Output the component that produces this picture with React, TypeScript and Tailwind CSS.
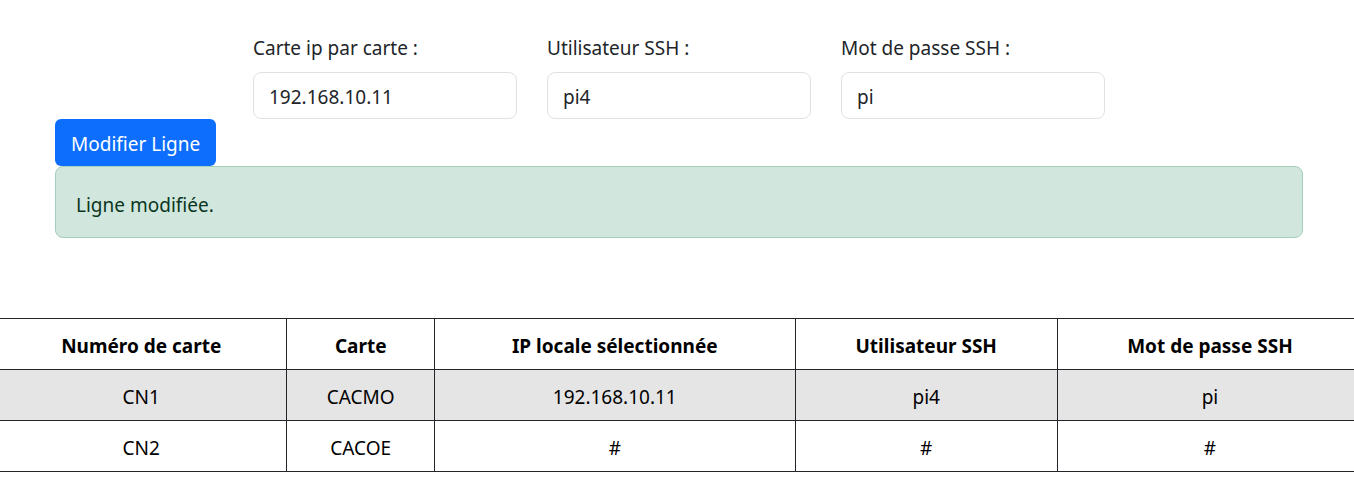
const fields = [
  { id: "ip", label: "Carte ip par carte :", value: "192.168.10.11" },
  { id: "user", label: "Utilisateur SSH :", value: "pi4" },
  { id: "password", label: "Mot de passe SSH :", value: "pi" },
];

const columns = [
  { title: "Numéro de carte", width: "w-[21.3%]" },
  { title: "Carte", width: "w-[10.8%]" },
  { title: "IP locale sélectionnée", width: "w-[26.4%]" },
  { title: "Utilisateur SSH", width: "w-[19.2%]" },
  { title: "Mot de passe SSH", width: "w-[22.3%]" },
];

const rows = [
  ["CN1", "CACMO", "192.168.10.11", "pi4", "pi"],
  ["CN2", "CACOE", "#", "#", "#"],
];

export default function App() {
  return (
    <main className="overflow-x-hidden bg-white pt-8 font-['Noto_Sans','Open_Sans',sans-serif] text-[19px] leading-7 text-[#212529]">
      <form className="mr-[51px] ml-[55px]" onSubmit={(e) => e.preventDefault()}>
        <div className="mr-[198px] ml-[198px] grid grid-cols-3 gap-[30px]">
          {fields.map((f) => (
            <div key={f.id}>
              <label htmlFor={f.id} className="mb-2 block leading-8">
                {f.label}
              </label>
              <input
                id={f.id}
                defaultValue={f.value}
                className="block h-[47px] w-full rounded-lg border border-[#dee2e6] bg-white px-[15px] pt-0.5"
              />
            </div>
          ))}
        </div>
        <button type="submit" className="block h-[47px] rounded-md bg-[#0d6efd] px-4 pt-0.5 text-white">
          Modifier Ligne
        </button>
        <div role="alert" className="rounded-lg border border-[#a3cfbb] bg-[#d1e7dd] px-5 pt-6 pb-[18px] text-[#0a3622]">
          Ligne modifiée.
        </div>
      </form>
      <div className="mt-20 -mr-2 -ml-1">
        <table className="w-full table-fixed border-collapse text-center text-black">
          <thead>
            <tr className="h-[51px] border-y border-[#212529]">
              {columns.map((c) => (
                <th key={c.title} className={`${c.width} border-r border-[#212529] pt-1 font-bold last:border-r-0`}>
                  {c.title}
                </th>
              ))}
            </tr>
          </thead>
          <tbody>
            {rows.map((r) => (
              <tr key={r[0]} className="h-[51px] border-b border-[#212529] odd:bg-[#e5e5e5]">
                {r.map((v, i) => (
                  <td key={i} className="border-r border-[#212529] pt-1 last:border-r-0">
                    {v}
                  </td>
                ))}
              </tr>
            ))}
          </tbody>
        </table>
      </div>
    </main>
  );
}
